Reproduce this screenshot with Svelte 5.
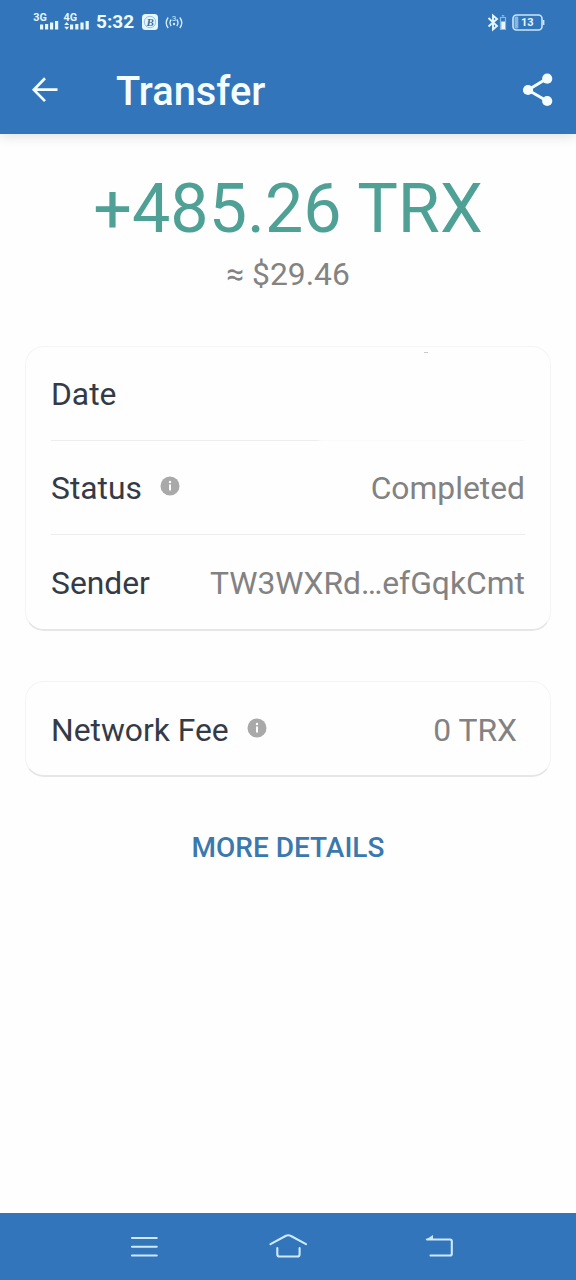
<script>
  let time = "5:32";
  let battery = 13;
  let amount = "+485.26 TRX";
  let fiat = "≈ $29.46";

  let details = [
    { label: "Date", value: "", info: false },
    { label: "Status", value: "Completed", info: true },
    { label: "Sender", value: "TW3WXRd…efGqkCmt", info: false },
  ];

  let signalBars = [5, 5.5, 7, 8.5];
</script>

{#snippet infoIcon()}
  <svg class="info" width="20" height="20" viewBox="0 0 20 20">
    <circle cx="10" cy="10" r="9.5" fill="#a9a9a9" />
    <circle cx="10" cy="6" r="1.2" fill="#fff" />
    <path d="M10 8.5V14.6" stroke="#fff" stroke-width="2" />
  </svg>
{/snippet}

<div class="screen">
  <header>
    <div class="status-bar">
      <div class="status-left">
        <svg width="58" height="24" viewBox="0 0 58 24" fill="#e6f6ff">
          <text class="net" x="0.2" y="11">3G</text>
          <text class="net" x="30.5" y="11">4G</text>
          {#each signalBars as h, i}
            <rect x={7 + i * 5} y={19.5 - h} width="3.2" height={h} />
            <rect x={37 + i * 5.2} y={19.5 - h} width="3.2" height={h} />
          {/each}
          <path d="M31.2 15L33.7 12L36.2 15ZM31.2 16.8L33.7 19.8L36.2 16.8Z" />
        </svg>
        <span class="time">{time}</span>
        <svg width="18" height="18" viewBox="0 0 18 18">
          <rect x="1" y="1" width="16" height="16" rx="3.5" fill="#e6f6ff" />
          <circle cx="9" cy="9" r="5.7" fill="none" stroke="#8dbbe0" stroke-width="0.9" />
          <text class="coin" x="5.6" y="13">B</text>
        </svg>
        <svg class="hotspot" width="18" height="18" viewBox="0 0 18 18" fill="none" stroke="#d5ecfb" stroke-width="1.3">
          <path d="M3.2 4.5Q-0.8 9.7 3.2 15M6.2 6.5Q3.8 9.7 6.2 13M14.8 4.5Q18.8 9.7 14.8 15M11.8 6.5Q14.2 9.7 11.8 13" />
          <circle cx="9" cy="11" r="1.2" fill="#d5ecfb" stroke="none" />
          <text class="tiny" x="6.8" y="7.5">3</text>
        </svg>
      </div>
      <div class="status-right">
        <svg width="58" height="20" viewBox="0 0 58 20" fill="none">
          <path d="M1.5 6L10 14L6 17.5V3.5L10 7L1.5 14.5" stroke="#e6f6ff" stroke-width="1.9" />
          <path d="M13.5 5.5H18.5V17.5H13.5Z" stroke="#86b8e2" stroke-width="1.2" />
          <path d="M14.7 3.8H17.3" stroke="#86b8e2" stroke-width="1.5" />
          <rect x="14.2" y="9.5" width="3.8" height="7.5" fill="#e6f6ff" />
          <rect x="26" y="3" width="29" height="15" rx="3.5" stroke="#cbe6f8" stroke-width="1.6" />
          <rect x="27.5" y="4.5" width="3.8" height="12" rx="1" fill="#86b8e2" />
          <path d="M56.6 8V13" stroke="#cbe6f8" stroke-width="1.6" />
          <text class="battery" x="40.2" y="14.2">{battery}</text>
        </svg>
      </div>
    </div>

    <div class="app-bar">
      <svg width="28" height="28" viewBox="0 0 28 28" fill="none" stroke="#f4fdff" stroke-width="2.7">
        <path d="M26.5 13.7H3M14 2.3L2.8 13.7L14 25.1" />
      </svg>
      <h1>Transfer</h1>
      <svg width="32" height="34" viewBox="0 0 32 34" fill="#f4fdff">
        <path d="M25 5.5L6 17L25 28" fill="none" stroke="#f4fdff" stroke-width="3" />
        <circle cx="25.2" cy="5.7" r="5.1" />
        <circle cx="6" cy="17" r="5.1" />
        <circle cx="25.2" cy="28" r="5.1" />
      </svg>
    </div>
  </header>

  <main>
    <div class="amount">{amount}</div>
    <div class="fiat">{fiat}</div>

    <section class="card details">
      {#each details as row}
        <div class="row">
          <span class="label">{row.label}</span>
          {#if row.info}
            {@render infoIcon()}
          {/if}
          <span class="value" class:blank={!row.value}>{row.value}</span>
        </div>
      {/each}
    </section>

    <section class="card fee">
      <div class="row">
        <span class="label">Network Fee</span>
        {@render infoIcon()}
        <span class="value">0 TRX</span>
      </div>
    </section>

    <button>MORE DETAILS</button>
  </main>

  <nav>
    <svg width="40" height="30" viewBox="0 0 40 30">
      <path d="M8 6H32.7M8 14.8H32.7M8 23.5H32.7" />
    </svg>
    <svg width="40" height="30" viewBox="0 0 40 30">
      <path d="M2.5 12.2L17.5 4Q20.2 2.6 23 4L38 12.2M9.3 16V22.2Q9.3 24.5 11.6 24.5H29.3Q31.6 24.5 31.6 22.2V16" />
    </svg>
    <svg width="40" height="30" viewBox="0 0 40 30">
      <path d="M8 7.5H31Q32.8 7.5 32.8 9.3V21.7Q32.8 23.5 31 23.5H11.5" />
      <path d="M6.5 8L14 3V8Z" fill="#cdeafb" stroke="none" />
    </svg>
  </nav>
</div>

<style>
  :global(body) {
    margin: 0;
    background: #fefefe;
  }
  .screen {
    width: 576px;
    height: 1280px;
    display: flex;
    flex-direction: column;
    background: #fefefe;
    font-family: Roboto, "Liberation Sans", sans-serif;
    overflow: hidden;
  }
  svg {
    display: block;
    flex: none;
  }
  header {
    height: 134px;
    background: #3275bb;
    box-shadow: 0 2px 12px rgba(0, 0, 0, 0.13);
  }
  .status-bar {
    height: 45px;
    padding: 0 31px 1px 33px;
    display: flex;
    justify-content: space-between;
    align-items: center;
    box-sizing: border-box;
  }
  .status-left {
    display: flex;
    align-items: center;
  }
  .net {
    font-size: 10.8px;
    font-weight: 700;
  }
  .time {
    margin: 0 7px 0 5px;
    color: #eefaff;
    font-size: 19px;
    font-weight: 700;
    line-height: 24px;
  }
  .coin {
    font: italic 700 11px "Liberation Serif", serif;
    fill: #35729f;
  }
  .hotspot {
    margin-left: 6px;
  }
  .tiny {
    font-size: 8px;
    fill: #d5ecfb;
    stroke: none;
  }
  .battery {
    font-size: 11px;
    font-weight: 700;
    fill: #e6f6ff;
    text-anchor: middle;
  }
  .app-bar {
    height: 89px;
    padding: 0 22px 0 31px;
    display: flex;
    align-items: center;
  }
  h1 {
    flex: 1;
    margin: 4px 0 0 57px;
    color: #f4fdff;
    font-size: 39.8px;
    font-weight: 500;
    line-height: 48px;
  }
  main {
    flex: 1;
    padding: 35px 25px 0;
    display: flex;
    flex-direction: column;
  }
  .amount {
    color: #4ea194;
    font-size: 68.2px;
    line-height: 80px;
    text-align: center;
  }
  .fiat {
    margin-top: 6px;
    color: #838383;
    font-size: 31.8px;
    line-height: 38px;
    text-align: center;
  }
  .card {
    padding: 0 25px;
    border: 1px solid #f4f4f4;
    border-bottom: 2px solid #e6e6e6;
    border-radius: 19px;
    box-sizing: border-box;
  }
  .details {
    height: 285px;
    margin-top: 53px;
  }
  .fee {
    height: 96px;
    margin-top: 50px;
  }
  .row {
    height: 94px;
    display: flex;
    align-items: center;
    box-sizing: border-box;
    padding-top: 1px;
  }
  .details .row {
    border-bottom: 1px solid #ededed;
  }
  /* divider fades out towards the empty date value */
  .details .row:first-child {
    border-image: linear-gradient(to right, #ededed 56%, #fafafa 57%) 1;
  }
  .details .row:last-child {
    border-bottom: none;
  }
  .label {
    color: #343b46;
    font-size: 31.8px;
  }
  .info {
    margin: -4px 0 0 18px;
  }
  .value {
    margin-left: auto;
    color: #828282;
    font-size: 31.8px;
  }
  .blank {
    align-self: flex-start;
    width: 4px;
    height: 1px;
    margin: 4px 97px 0 auto;
    background: #c9c9c9;
  }
  .fee .row {
    padding-top: 2px;
  }
  .fee .value {
    margin-right: 8px;
  }
  button {
    align-self: center;
    margin-top: 53px;
    padding: 0;
    border: none;
    background: none;
    color: #3b78ae;
    font-family: inherit;
    font-size: 28px;
    font-weight: 500;
    line-height: 36px;
  }
  nav {
    height: 67px;
    padding: 0 117px 0 124px;
    display: grid;
    grid-template-columns: 144px 1fr 40px;
    align-items: center;
    background: #3275bb;
  }
  nav svg {
    fill: none;
    stroke: #cdeafb;
    stroke-width: 2.1;
    stroke-linecap: round;
  }
</style>
